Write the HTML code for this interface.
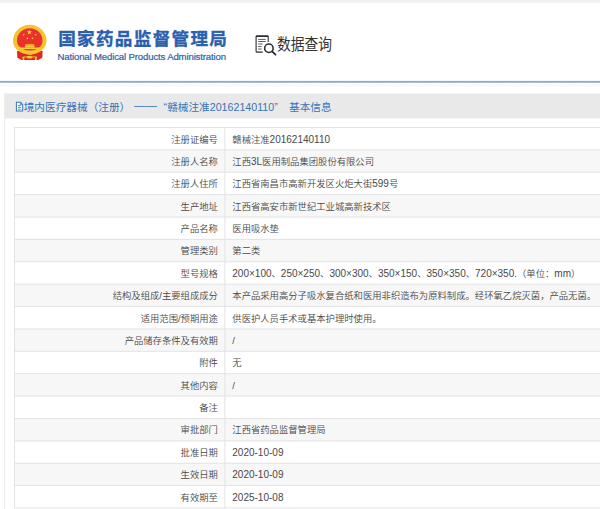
<!DOCTYPE html>
<html lang="zh-CN">
<head>
<meta charset="utf-8">
<title>数据查询</title>
<style>
html,body{margin:0;padding:0;overflow:hidden;}
body{width:600px;height:509px;overflow:hidden;background:#fff;position:relative;font-family:"Liberation Sans","Noto Sans CJK SC",sans-serif;}
.art{position:absolute;left:0;top:0;width:600px;height:509px;}
.title{position:absolute;left:58.2px;top:25.9px;font-size:17.6px;font-weight:bold;color:#2b5fad;-webkit-text-stroke:.35px #2b5fad;letter-spacing:1.3px;white-space:nowrap;line-height:26px;}
.sub{position:absolute;left:57.5px;top:50.6px;font-size:9.6px;color:#2b5fad;-webkit-text-stroke:.2px #2b5fad;white-space:nowrap;line-height:12px;letter-spacing:-0.15px;}
.qtext{position:absolute;left:276.5px;top:33.5px;font-size:16px;color:#333;white-space:nowrap;line-height:22px;transform:scaleX(0.86);transform-origin:0 0;}
.phead{position:absolute;left:5px;top:93.5px;width:595px;height:25px;}
.phead span{position:absolute;top:6.1px;font-size:10.67px;line-height:14px;color:#3873b8;white-space:nowrap;}
.r{position:absolute;left:0;width:600px;height:22.38px;line-height:22.38px;font-size:9.33px;font-weight:350;color:#484848;white-space:nowrap;}
.r .l{position:absolute;right:382.1px;top:1px;}
.r .v{position:absolute;left:232.3px;top:1px;}
.r i{font-style:normal;font-size:10px;}
</style>
</head>
<body>
<svg class="art" viewBox="0 0 600 509">
<rect x="0" y="0" width="600" height="2.7" fill="#f1f1f1"/>
<!-- header separators -->
<rect x="0" y="80.9" width="600" height="1.9" fill="#8facc8"/>
<defs><pattern id="hp" width="3" height="3" patternUnits="userSpaceOnUse"><path d="M0 3 L3 0" stroke="#e4e4e4" stroke-width=".6"/></pattern></defs>
<rect x="0" y="84" width="600" height="2.4" fill="url(#hp)"/>
<!-- panel -->
<rect x="4.2" y="93.5" width="1" height="420" fill="#ececec"/>
<rect x="4.7" y="93.5" width="596" height="25.1" fill="#e9e9e9"/>
<rect x="14.5" y="149.88" width="590" height="22.38" fill="#f7f7f7"/>
<rect x="14.5" y="194.64" width="590" height="22.38" fill="#f7f7f7"/>
<rect x="14.5" y="239.40" width="590" height="22.38" fill="#f7f7f7"/>
<rect x="14.5" y="284.16" width="590" height="22.38" fill="#f7f7f7"/>
<rect x="14.5" y="328.92" width="590" height="22.38" fill="#f7f7f7"/>
<rect x="14.5" y="373.68" width="590" height="22.38" fill="#f7f7f7"/>
<rect x="14.5" y="418.44" width="590" height="22.38" fill="#f7f7f7"/>
<rect x="14.5" y="463.20" width="590" height="22.38" fill="#f7f7f7"/>
<rect x="14" y="127.00" width="590" height="1" fill="#e3e3e3"/>
<rect x="14" y="149.38" width="590" height="1" fill="#e3e3e3"/>
<rect x="14" y="171.76" width="590" height="1" fill="#e3e3e3"/>
<rect x="14" y="194.14" width="590" height="1" fill="#e3e3e3"/>
<rect x="14" y="216.52" width="590" height="1" fill="#e3e3e3"/>
<rect x="14" y="238.90" width="590" height="1" fill="#e3e3e3"/>
<rect x="14" y="261.28" width="590" height="1" fill="#e3e3e3"/>
<rect x="14" y="283.66" width="590" height="1" fill="#e3e3e3"/>
<rect x="14" y="306.04" width="590" height="1" fill="#e3e3e3"/>
<rect x="14" y="328.42" width="590" height="1" fill="#e3e3e3"/>
<rect x="14" y="350.80" width="590" height="1" fill="#e3e3e3"/>
<rect x="14" y="373.18" width="590" height="1" fill="#e3e3e3"/>
<rect x="14" y="395.56" width="590" height="1" fill="#e3e3e3"/>
<rect x="14" y="417.94" width="590" height="1" fill="#e3e3e3"/>
<rect x="14" y="440.32" width="590" height="1" fill="#e3e3e3"/>
<rect x="14" y="462.70" width="590" height="1" fill="#e3e3e3"/>
<rect x="14" y="485.08" width="590" height="1" fill="#e3e3e3"/>
<rect x="14" y="507.46" width="590" height="1" fill="#e3e3e3"/>
<rect x="14" y="127.00" width="1" height="381.46" fill="#e3e3e3"/>
<rect x="224.4" y="127.00" width="1" height="381.46" fill="#e3e3e3"/>
<!-- emblem -->
<g>
<path d="M17 51 L42.6 51 L42.3 57.8 L38.2 59.9 L21.4 59.9 L17.3 57.8 Z" fill="#de2b22"/>
<path d="M13.0 40.7 A16.75 16 0 0 1 46.5 40.7 A16.75 13.9 0 0 1 13.0 40.7 Z" fill="#f6c42c"/>
<path d="M17.0 40.7 A12.75 12.5 0 0 1 42.5 40.7 A12.75 10.1 0 0 1 17.0 40.7 Z" fill="#e9322b"/>
<!-- gate -->
<path d="M25.6 44.1 H33.9 L34.6 45.4 H24.9 Z" fill="#f2a32a"/>
<rect x="25.1" y="45.4" width="9.3" height="2.2" fill="#f8cc33"/>
<rect x="19.7" y="47.5" width="20.1" height="1.6" fill="#f8cc33"/>
<!-- knot, lower ornaments -->
<circle cx="29.75" cy="52.8" r="2.3" fill="#f8cc33"/>
<circle cx="29.75" cy="52.8" r="1" fill="none" stroke="#ee9a2c" stroke-width=".5"/>
<path d="M22.3 57.2 Q26 56.2 29.6 57.4 Q33.4 56.2 37.2 57.2" fill="none" stroke="#f6c42c" stroke-width=".9"/>
<ellipse cx="29.6" cy="57.3" rx="3" ry="1.3" fill="#f8cc33"/>
<rect x="22.6" y="57" width="1.7" height="3" fill="#f6c42c"/>
<rect x="35" y="57" width="1.7" height="3" fill="#f6c42c"/>
<polygon points="29.40,29.40 30.06,31.29 32.06,31.33 30.47,32.55 31.05,34.47 29.40,33.32 27.75,34.47 28.33,32.55 26.74,31.33 28.74,31.29" fill="#f9d43a"/><polygon points="24.35,33.57 24.18,34.49 24.97,34.97 24.05,35.09 23.84,35.99 23.44,35.15 22.51,35.23 23.19,34.59 22.83,33.73 23.65,34.18" fill="#f9d43a"/><polygon points="34.95,33.57 35.65,34.18 36.47,33.73 36.11,34.59 36.79,35.23 35.86,35.15 35.46,35.99 35.25,35.09 34.33,34.97 35.12,34.49" fill="#f9d43a"/><polygon points="27.63,37.02 27.77,37.94 28.69,38.12 27.86,38.54 27.97,39.47 27.31,38.81 26.46,39.20 26.89,38.37 26.25,37.69 27.17,37.83" fill="#f9d43a"/><polygon points="32.27,37.02 32.73,37.83 33.65,37.69 33.01,38.37 33.44,39.20 32.59,38.81 31.93,39.47 32.04,38.54 31.21,38.12 32.13,37.94" fill="#f9d43a"/>
</g>
<!-- query icon -->
<g fill="none" stroke="#2b2b33" stroke-linecap="round" stroke-linejoin="round">
<path d="M268.2 41.5 V36.8 Q268.2 36.1 267.5 36.1 H256.8 Q256.1 36.1 256.1 36.8 V51.4 Q256.1 52.1 256.8 52.1 H262.3" stroke-width="1.1"/>
<g stroke="#4a4a4a" stroke-width=".9" stroke-linecap="butt">
<path d="M258.2 39.4 H265.7 M258.2 41.5 H265.7 M258.2 44 H262.6 M258.2 46.55 H261.6 M258.2 49 H261.6"/>
</g>
<circle cx="268.9" cy="48.25" r="4.25" stroke-width="1.6"/>
<path d="M256.5 36.2 H267.8" stroke-width="1.5"/>
<path d="M272.3 51.6 L275.5 54.6" stroke-width="1.9"/>
</g>
<!-- section icon -->
<g fill="#fff" stroke="#3b78c0" stroke-width="1.05" stroke-linejoin="round">
<path d="M16.4 102.2 H20.4 L22.7 104.5 V110.9 H16.4 Z"/>
<path d="M20.4 102.2 V104.5 H22.7" fill="none" stroke-width=".8"/>
<path d="M17.9 105.6 H21.2 M17.9 107.4 H21.2 M17.9 109.2 H21.2" stroke-width=".8" fill="none"/>
</g>
</svg>
<div class="title">国家药品监督管理局</div>
<div class="sub">National Medical Products Administration</div>
<div class="qtext">数据查询</div>
<div class="phead">
<span style="left:18.7px">境内医疗器械（注册）</span>
<span style="left:128.8px;top:4.4px;transform:scaleX(1.07);transform-origin:0 0">——</span>
<span style="left:158.6px">“赣械注准20162140110”</span>
<span style="left:284px">基本信息</span>
</div>
<div class="r" style="top:127.50px"><span class="l">注册证编号</span><span class="v">赣械注准<i>20162140110</i></span></div>
<div class="r" style="top:149.88px"><span class="l">注册人名称</span><span class="v">江西<i>3L</i>医用制品集团股份有限公司</span></div>
<div class="r" style="top:172.26px"><span class="l">注册人住所</span><span class="v">江西省南昌市高新开发区火炬大街<i>599</i>号</span></div>
<div class="r" style="top:194.64px"><span class="l">生产地址</span><span class="v">江西省高安市新世纪工业城高新技术区</span></div>
<div class="r" style="top:217.02px"><span class="l">产品名称</span><span class="v">医用吸水垫</span></div>
<div class="r" style="top:239.40px"><span class="l">管理类别</span><span class="v">第二类</span></div>
<div class="r" style="top:261.78px"><span class="l">型号规格</span><span class="v"><i>200×100</i>、<i>250×250</i>、<i>300×300</i>、<i>350×150</i>、<i>350×350</i>、<i>720×350.</i>（单位：<i>mm</i>）</span></div>
<div class="r" style="top:284.16px"><span class="l">结构及组成/主要组成成分</span><span class="v">本产品采用高分子吸水复合纸和医用非织造布为原料制成。经环氧乙烷灭菌，产品无菌。</span></div>
<div class="r" style="top:306.54px"><span class="l">适用范围/预期用途</span><span class="v">供医护人员手术或基本护理时使用。</span></div>
<div class="r" style="top:328.92px"><span class="l">产品储存条件及有效期</span><span class="v">/</span></div>
<div class="r" style="top:351.30px"><span class="l">附件</span><span class="v">无</span></div>
<div class="r" style="top:373.68px"><span class="l">其他内容</span><span class="v">/</span></div>
<div class="r" style="top:396.06px"><span class="l">备注</span><span class="v"></span></div>
<div class="r" style="top:418.44px"><span class="l">审批部门</span><span class="v">江西省药品监督管理局</span></div>
<div class="r" style="top:440.82px"><span class="l">批准日期</span><span class="v"><i>2020-10-09</i></span></div>
<div class="r" style="top:463.20px"><span class="l">生效日期</span><span class="v"><i>2020-10-09</i></span></div>
<div class="r" style="top:485.58px"><span class="l">有效期至</span><span class="v"><i>2025-10-08</i></span></div>
</body>
</html>
